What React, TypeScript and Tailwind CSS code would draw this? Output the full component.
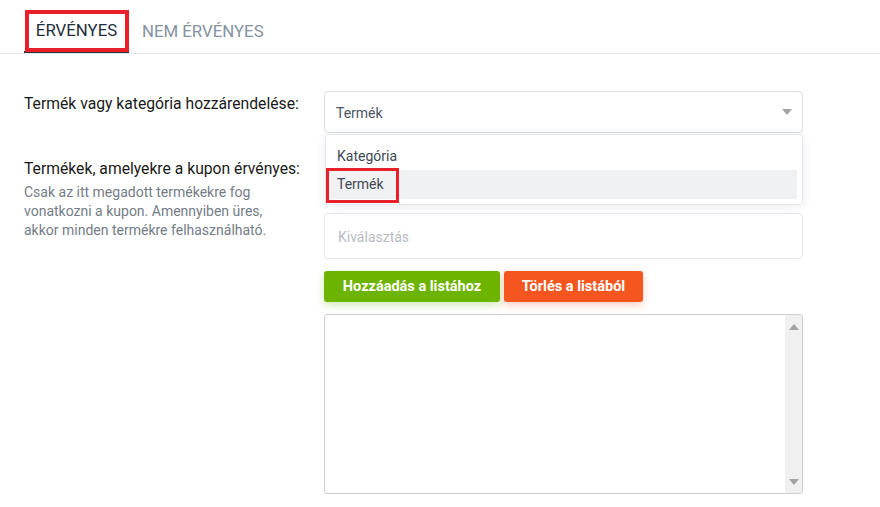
import React from "react";

const font = { fontFamily: "Roboto, 'Noto Sans', Arial, sans-serif" };

function Caret({ up }: { up?: boolean }) {
  return (
    <svg width="10" height="6" viewBox="0 0 10 6">
      {up ? <path d="M0 6 L5 0 L10 6 Z" fill="#a3a3a3" /> : <path d="M0 0 L10 0 L5 6 Z" fill="#a3a3a3" />}
    </svg>
  );
}

export default function App() {
  return (
    <div className="w-[880px] h-[507px] bg-white overflow-hidden relative" style={font}>
      {/* tabs */}
      <div className="flex pl-[24px] pt-[10px] border-b border-[#e4e7ed] h-[54px]">
        <div className="relative w-[105px] flex items-center justify-center text-[16.8px] text-[#1f2d3d] border-b-2 border-[#303133]">
          <span className="mt-[1px]">ÉRVÉNYES</span>
          <div className="absolute left-[1px] top-0 w-[104px] h-[42px] border-[4px] border-[#e8202a]" />
        </div>
        <div className="flex items-center px-[13px] text-[16.8px] text-[#8592a0]">
          <span className="mt-[1px]">NEM ÉRVÉNYES</span>
        </div>
      </div>

      {/* form */}
      <div className="grid grid-cols-[300px_479px] pl-[24px] pt-[37px]">
        <div className="text-[15.7px] text-[#1a1a1a] pt-[1px]">Termék vagy kategória hozzárendelése:</div>
        <div className="relative">
          <div className="h-[42px] border border-[#dcdfe6] rounded-[4px] flex items-center justify-between pl-[11px] pr-[10px]">
            <span className="text-[14px] text-[#4b5563] mt-[2px]">Termék</span>
            <Caret />
          </div>
          <div className="absolute left-[1px] right-0 top-[43px] h-[71px] bg-white border border-[#e4e7ed] rounded-[3px] shadow-[0_2px_12px_rgba(0,0,0,0.08)] z-10 pt-[8px]">
            <div className="h-[27px] flex items-center pl-[11px] text-[14px] text-[#404854]">Kategória</div>
            <div className="relative h-[29px] mr-[5px] bg-[#f0f1f3] flex items-center pl-[11px] text-[14px] text-[#404854]">
              Termék
              <div className="absolute left-0 top-[-2px] w-[73px] h-[35px] border-[3px] border-[#e8202a]" />
            </div>
          </div>
        </div>

        <div className="pt-[24px]">
          <div className="text-[15.7px] text-[#1a1a1a]">Termékek, amelyekre a kupon érvényes:</div>
          <div className="text-[14px] leading-[19px] text-[#747c87] mt-[2px] w-[270px]">
            Csak az itt megadott termékekre fog vonatkozni a kupon. Amennyiben üres, akkor minden termékre felhasználható.
          </div>
        </div>
        <div className="pt-[80px]">
          <div className="h-[46px] border border-[#e4e7ed] rounded-[4px] flex items-center pl-[13px] text-[14px] text-[#b8bcc4]">
            <span className="mt-[3px]">Kiválasztás</span>
          </div>
          <div className="flex gap-[4px] mt-[12px]">
            <button className="h-[31px] w-[176px] rounded-[3px] bg-[#6db400] text-white text-[14.5px] font-bold shadow-[0_3px_8px_rgba(109,180,0,0.3)]">
              Hozzáadás a listához
            </button>
            <button className="h-[31px] w-[139px] rounded-[3px] bg-[#f55620] text-white text-[14.5px] font-bold shadow-[0_3px_8px_rgba(245,86,32,0.3)]">
              Törlés a listából
            </button>
          </div>
          <div className="mt-[12px] h-[180px] border border-[#cfcfcf] rounded-[3px] flex justify-end overflow-hidden">
            <div className="w-[17px] bg-[#f0f0f0] flex flex-col items-center justify-between pt-[9px] pb-[8px]">
              <Caret up />
              <Caret />
            </div>
          </div>
        </div>
      </div>
    </div>
  );
}
